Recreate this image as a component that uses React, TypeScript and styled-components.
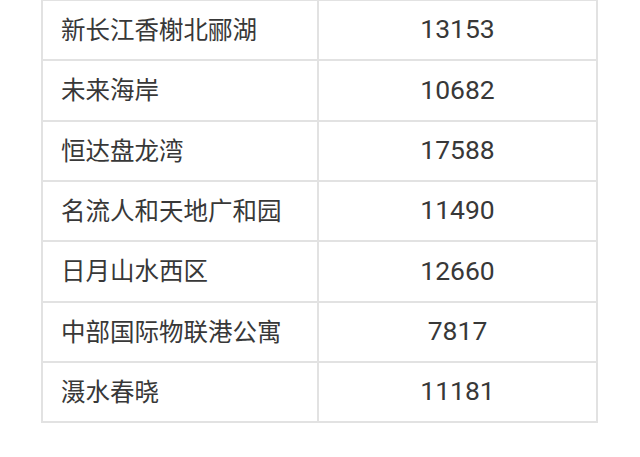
import React from "react";
import styled, { createGlobalStyle } from "styled-components";

const Global = createGlobalStyle`
  html, body { margin: 0; padding: 0; background: #ffffff; }
  body { font-family: Roboto, "Noto Sans CJK SC", sans-serif; }
`;

const Page = styled.div`
  width: 640px;
  height: 457px;
  overflow: hidden;
  background: #ffffff;
`;

const Table = styled.div`
  box-sizing: border-box;
  width: 557px;
  margin: -1px 0 0 41px;
  border: 2px solid #e2e2e2;
`;

const Row = styled.div`
  display: grid;
  grid-template-columns: 276px 1fr;
  height: 58.33px;
  & + & {
    border-top: 2px solid #e2e2e2;
  }
`;

const NameCell = styled.div`
  box-sizing: border-box;
  display: flex;
  align-items: center;
  padding: 0 0 2px 18px;
  border-right: 2px solid #e2e2e2;
  font-family: "Noto Sans CJK SC", sans-serif;
  font-size: 24.5px;
  line-height: 1;
  color: #383838;
`;

const ValueCell = styled.div`
  box-sizing: border-box;
  display: flex;
  align-items: center;
  justify-content: center;
  padding-bottom: 1px;
  font-family: Roboto, sans-serif;
  font-size: 26.5px;
  line-height: 1;
  color: #383838;
`;

const rows: [string, string][] = [
  ["新长江香榭北郦湖", "13153"],
  ["未来海岸", "10682"],
  ["恒达盘龙湾", "17588"],
  ["名流人和天地广和园", "11490"],
  ["日月山水西区", "12660"],
  ["中部国际物联港公寓", "7817"],
  ["滠水春晓", "11181"],
];

export default function App() {
  return (
    <Page>
      <Global />
      <Table>
        {rows.map(([name, value]) => (
          <Row key={name}>
            <NameCell>{name}</NameCell>
            <ValueCell>{value}</ValueCell>
          </Row>
        ))}
      </Table>
    </Page>
  );
}
